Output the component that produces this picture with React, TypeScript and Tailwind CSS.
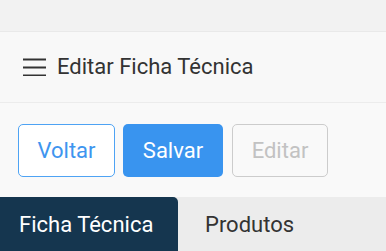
import React from "react";

export default function App() {
  return (
    <div
      className="w-[386px] h-[251px] overflow-hidden bg-[#f9f9f9] flex flex-col"
      style={{ fontFamily: "Roboto, 'Liberation Sans', sans-serif" }}
    >
      <div className="h-[32px] shrink-0 bg-[#f2f2f2] border-b border-[#e9e9e9]" />
      <div className="h-[71px] shrink-0 bg-[#f8f8f8] border-b border-[#ececec] flex items-center pl-[23px] gap-[11px]">
        <svg width="23" height="18" viewBox="0 0 23 18" className="shrink-0">
          <rect x="0" y="0.5" width="23" height="2" fill="#333" />
          <rect x="0" y="8.5" width="23" height="2" fill="#333" />
          <rect x="0" y="16.5" width="23" height="2" fill="#333" />
        </svg>
        <span className="text-[22px] text-[#333333] leading-none">Editar Ficha Técnica</span>
      </div>
      <div className="flex items-center gap-[8px] px-[18px] pt-[21px] pb-[20px] shrink-0">
        <button className="w-[97px] h-[53px] rounded-[5px] border border-[#4ea3f4] text-[#3e95ef] text-[22px] bg-white flex items-center justify-center">
          Voltar
        </button>
        <button className="w-[100px] h-[53px] rounded-[5px] bg-[#3994ef] text-white text-[22px] flex items-center justify-center">
          Salvar
        </button>
        <button className="ml-[1px] w-[96px] h-[53px] rounded-[5px] border border-[#cccccc] text-[#c2c2c2] text-[22px] bg-[#f9f9f9] flex items-center justify-center">
          Editar
        </button>
      </div>
      <div className="flex-1 bg-[#ececec] flex items-stretch">
        <div className="w-[178px] bg-[#15364f] rounded-tr-[5px] text-white text-[22px] pl-[19px] pt-[17px] leading-none">
          Ficha Técnica
        </div>
        <div className="text-[#333333] text-[22px] pl-[27px] pt-[17px] leading-none">
          Produtos
        </div>
      </div>
    </div>
  );
}
